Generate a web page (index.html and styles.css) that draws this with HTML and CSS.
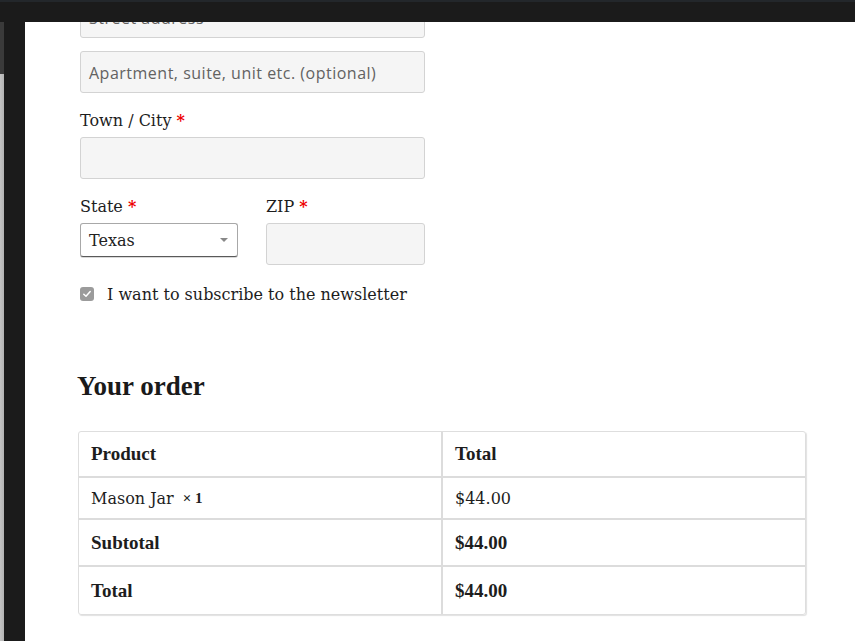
FILE: index.html
```html
<!DOCTYPE html>
<html lang="en">
<head>
<meta charset="utf-8">
<title>Checkout</title>
<link rel="stylesheet" href="styles.css">
</head>
<body>
<div class="topbar"></div>
<div class="stage">
  <div class="peek">
    <div class="peek-dark"></div>
    <div class="peek-light"></div>
  </div>
  <div class="gutter"></div>
  <div class="modal">
    <div class="content">
      <div class="field first">
        <div class="input"><span class="ph">Street address</span></div>
      </div>
      <div class="field">
        <div class="input"><span class="ph">Apartment, suite, unit etc. (optional)</span></div>
      </div>
      <div class="field">
        <div class="label">Town / City <span class="req">*</span></div>
        <div class="input"></div>
      </div>
      <div class="field row">
        <div class="col col-state">
          <div class="label">State <span class="req">*</span></div>
          <div class="select">
            <span class="select-text">Texas</span>
            <span class="caret"></span>
          </div>
        </div>
        <div class="col col-zip">
          <div class="label">ZIP <span class="req">*</span></div>
          <div class="input"></div>
        </div>
      </div>
      <div class="check-row">
        <span class="checkbox">
          <svg width="10" height="10" viewBox="0 0 10 10"><path d="M1.8 5.2 L4 7.3 L8.2 2.6" fill="none" stroke="#fff" stroke-width="1.5" stroke-linecap="round" stroke-linejoin="round"/></svg>
        </span>
        <span class="check-label">I want to subscribe to the newsletter</span>
      </div>
      <h2 class="heading">Your order</h2>
      <div class="order">
        <div class="tr head">
          <div class="td">Product</div>
          <div class="td">Total</div>
        </div>
        <div class="tr item">
          <div class="td">Mason Jar <strong class="qty">× 1</strong></div>
          <div class="td price">$44.00</div>
        </div>
        <div class="tr bold">
          <div class="td">Subtotal</div>
          <div class="td">$44.00</div>
        </div>
        <div class="tr bold last">
          <div class="td">Total</div>
          <div class="td">$44.00</div>
        </div>
      </div>
    </div>
  </div>
</div>
</body>
</html>
```
FILE: styles.css
```css
* { box-sizing: border-box; }
html, body { margin: 0; height: 100%; }
body {
  background: #1b1b1b;
  font-family: "DejaVu Serif", "Liberation Serif", serif;
  color: #1d1d1d;
  overflow: hidden;
  display: flex;
  flex-direction: column;
}
.topbar {
  height: 22px;
  flex: none;
  background: #1b1b1b;
  border-top: 2px solid #23272b;
}
.stage {
  flex: 1;
  display: flex;
  min-height: 0;
}
.peek {
  width: 4px;
  flex: none;
  display: flex;
  flex-direction: column;
}
.peek-dark { height: 52px; background: #3a3a3a; }
.peek-light {
  flex: 1;
  background: linear-gradient(to right, #c4c4c4, #b3b3b3);
}
.gutter { width: 21px; flex: none; background: #1b1b1b; }
.modal {
  flex: 1;
  background: #fff;
  overflow: hidden;
}
.content {
  margin-top: -26px;
  padding: 0 49px 0 55px;
}
.field { margin-bottom: 14px; }
.field.first { margin-bottom: 13px; }
.input {
  width: 345px;
  height: 42px;
  background: #f5f5f5;
  border: 1px solid #d3d3d3;
  border-radius: 3px;
  display: flex;
  align-items: center;
  padding: 0 8px;
}
.ph {
  font-family: "Open Sans", "Liberation Sans", sans-serif;
  font-size: 16px;
  letter-spacing: 0.5px;
  color: #626262;
  padding-top: 1px;
}
.label {
  height: 24px;
  line-height: 28px;
  font-size: 16px;
  margin-bottom: 6px;
}
.req { color: #e00; font-weight: bold; }
.row { display: flex; gap: 28px; }
.col-state { width: 158px; }
.col-zip { width: 159px; }
.col-zip .input { width: 159px; }
.select {
  width: 158px;
  height: 34px;
  border: 1px solid #a8a8a8;
  border-bottom-color: #5a5a5a;
  border-radius: 3px;
  background: #fff;
  box-shadow: 0 1px 0 rgba(0,0,0,0.15);
  display: flex;
  align-items: center;
  justify-content: space-between;
  padding: 0 9px 0 8px;
}
.select-text { font-size: 16px; color: #222; }
.caret {
  width: 0; height: 0;
  border-left: 4px solid transparent;
  border-right: 4px solid transparent;
  border-top: 4px solid #888;
}
.check-row {
  display: flex;
  align-items: center;
  gap: 13px;
  margin-top: 21px;
  height: 16px;
}
.checkbox {
  width: 14px;
  height: 14px;
  border-radius: 3px;
  background: #9b9b9b;
  display: flex;
  align-items: center;
  justify-content: center;
}
.check-label { font-size: 16px; color: #1d1d1d; }
.heading {
  font-family: "Liberation Serif", serif;
  font-size: 27px;
  font-weight: bold;
  margin: 67px 0 0 -3px;
  line-height: 34px;
  color: #1a1a1a;
}
.order {
  margin: 28px 0 30px -2px;
  border: 1px solid #dedede;
  border-radius: 3px;
  box-shadow: 1px 1px 1px rgba(0,0,0,0.12);
  font-size: 16px;
}
.tr {
  display: grid;
  grid-template-columns: 362px 1fr;
  border-bottom: 2px solid #dcdcdc;
  height: 46px;
  align-items: center;
}
.tr.item { height: 42px; }
.tr.bold, .tr.last { height: 47px; }
.tr.last { border-bottom: none; }
.td {
  padding: 0 12px;
  height: 100%;
  display: flex;
  align-items: center;
}
.td + .td { border-left: 2px solid #dcdcdc; }
.head .td, .bold .td {
  font-family: "Liberation Serif", serif;
  font-weight: bold;
  font-size: 19px;
}
.qty {
  font-family: "Liberation Serif", serif;
  font-size: 15px;
  margin-left: 9px;
}
```
